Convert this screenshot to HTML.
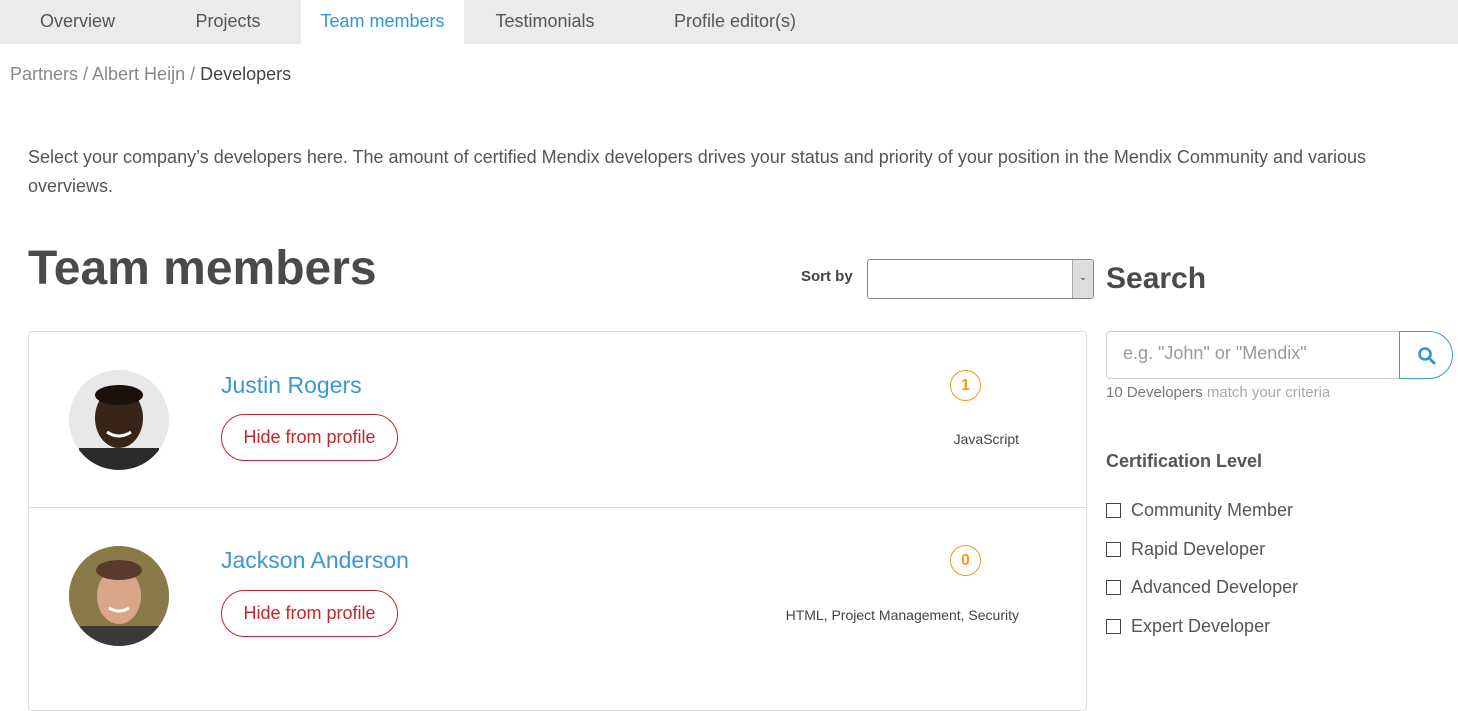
<!DOCTYPE html>
<html><head><meta charset="utf-8"><style>
*{box-sizing:border-box;margin:0;padding:0}
body{width:1458px;height:692px;overflow:hidden;background:#fff;font-family:"Liberation Sans",sans-serif;color:#555;position:relative}
.abs{position:absolute}
.tabs{position:absolute;left:0;top:0;width:1458px;height:44px;background:#ebebeb}
.tab{position:absolute;top:0;height:44px;line-height:42px;font-size:18px;color:#555;text-align:center}
.card{position:absolute;left:28px;top:331px;width:1059px;height:380px;border:1px solid #ddd;border-radius:4px}
.name{position:absolute;font-size:23px;color:#3b97d3}
.btn{position:absolute;left:221px;width:177px;height:47px;border:1px solid #c0262d;border-radius:24px;color:#c0262d;font-size:18px;text-align:center;line-height:44px}
.badge{position:absolute;width:31px;height:31px;border:1px solid #f39a1e;border-radius:50%;color:#f39a1e;font-weight:bold;font-size:16px;text-align:center;line-height:29px}
.skills{position:absolute;font-size:14px;color:#444;text-align:right;width:400px}
.cb{position:absolute;left:1106px;font-size:18px;color:#555}
.cb span{display:inline-block;width:15px;height:15px;border:1px solid #444;vertical-align:-2px;margin-right:10px}
.av{position:absolute;left:69px;width:100px;height:100px;border-radius:50%;overflow:hidden}
</style></head><body>
<div class="tabs">
<div class="tab" style="left:0;width:155px">Overview</div>
<div class="tab" style="left:155px;width:146px">Projects</div>
<div class="tab" style="left:301px;width:163px;background:#fff;color:#2d95d8">Team members</div>
<div class="tab" style="left:464px;width:162px">Testimonials</div>
<div class="tab" style="left:626px;width:218px">Profile editor(s)</div>
</div>
<div class="abs" style="left:10px;top:64px;font-size:18px;color:#888">Partners / Albert Heijn / <span style="color:#444">Developers</span></div>
<div class="abs" style="left:28px;top:143px;width:1395px;font-size:18px;line-height:29px;color:#555">Select your company’s developers here. The amount of certified Mendix developers drives your status and priority of your position in the Mendix Community and various overviews.</div>
<div class="abs" style="left:28px;top:241px;font-size:48px;font-weight:bold;color:#4a4a4a">Team members</div>
<div class="abs" style="left:801px;top:268px;font-size:15px;font-weight:bold;color:#444">Sort by</div>
<div class="abs" style="left:867px;top:259px;width:227px;height:40px;border:1px solid #888;border-radius:3px;overflow:hidden"><div class="abs" style="right:0;top:0;width:21px;height:40px;background:#ddd;border-left:1px solid #aaa;font-size:10px;text-align:center;line-height:36px;color:#444">⌄</div></div>
<div class="abs" style="left:1106px;top:262px;font-size:30px;font-weight:bold;color:#4a4a4a">Search</div>
<div class="abs" style="left:1106px;top:331px;width:294px;height:48px;border:1px solid #ccc;border-radius:4px 0 0 4px;font-size:18px;color:#999;padding:11px 0 0 16px">e.g. "John" or "Mendix"</div>
<div class="abs" style="left:1399px;top:331px;width:54px;height:48px;border:1px solid #3b97d3;border-radius:0 24px 24px 0">
<svg class="abs" style="left:17px;top:14px" width="20" height="20" viewBox="0 0 20 20"><circle cx="8" cy="8" r="5.5" fill="none" stroke="#2d95d8" stroke-width="2.6"/><path d="M12 12l5 5" stroke="#2d95d8" stroke-width="3" stroke-linecap="round"/></svg></div>
<div class="abs" style="left:1106px;top:384px;font-size:15px;color:#777">10 Developers <span style="color:#aaa">match your criteria</span></div>
<div class="abs" style="left:1106px;top:451px;font-size:18px;font-weight:bold;color:#555">Certification Level</div>
<div class="cb" style="top:500px"><span></span>Community Member</div>
<div class="cb" style="top:539px"><span></span>Rapid Developer</div>
<div class="cb" style="top:577px"><span></span>Advanced Developer</div>
<div class="cb" style="top:616px"><span></span>Expert Developer</div>
<div class="card"></div>
<div class="abs" style="left:29px;top:507px;width:1057px;height:1px;background:#ddd"></div>
<div class="av" style="top:370px;background:#e8e8e8"><svg width="100" height="100"><ellipse cx="50" cy="48" rx="24" ry="30" fill="#3a2418"/><ellipse cx="50" cy="25" rx="24" ry="10" fill="#1a110c"/><rect x="10" y="78" width="80" height="30" fill="#2a2a2a"/><path d="M38 62q12 8 24 0" stroke="#fff" stroke-width="3" fill="none"/></svg></div>
<div class="av" style="top:546px;background:#7a8a4a"><svg width="100" height="100"><rect width="100" height="100" fill="#8a7a4a"/><ellipse cx="50" cy="50" rx="22" ry="28" fill="#d9a687"/><ellipse cx="50" cy="24" rx="23" ry="10" fill="#5a3a2a"/><rect x="10" y="80" width="80" height="30" fill="#3a3a3a"/><path d="M40 62q10 6 20 0" stroke="#fff" stroke-width="3" fill="none"/></svg></div>
<div class="name" style="left:221px;top:372px">Justin Rogers</div>
<div class="btn" style="top:414px">Hide from profile</div>
<div class="badge" style="left:950px;top:370px">1</div>
<div class="skills" style="left:619px;top:431px">JavaScript</div>
<div class="name" style="left:221px;top:547px">Jackson Anderson</div>
<div class="btn" style="top:590px">Hide from profile</div>
<div class="badge" style="left:950px;top:545px">0</div>
<div class="skills" style="left:619px;top:607px">HTML, Project Management, Security</div>
</body></html>
